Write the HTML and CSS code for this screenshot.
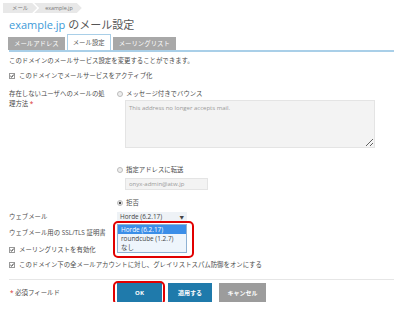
FILE: index.html
```html
<!DOCTYPE html>
<html lang="ja">

<head>
  <meta charset="UTF-8" />
  <meta name="viewport" content="width=device-width, initial-scale=1.0" />
  <title>example.jp のメール設定</title>
  <link rel="stylesheet" href="styles.css">
</head>

<body>
  <div class="page">
    <nav class="breadcrumb">
      <span class="crumb">メール</span>
      <span class="crumb last">example.jp</span>
    </nav>

    <h1 class="title"><span class="domain">example.jp</span> のメール設定</h1>

    <div class="tabs">
      <span class="tab">メールアドレス</span>
      <span class="tab active">メール設定</span>
      <span class="tab">メーリングリスト</span>
    </div>

    <p class="intro">このドメインのメールサービス設定を変更することができます。</p>

    <label class="check first">
      <svg class="box" width="6" height="6" viewBox="0 0 6 6"><rect x="0.5" y="0.5" width="5" height="5" fill="#fff" stroke="#999"/><path d="M1.4 3 L2.6 4.2 L4.7 1.6" fill="none" stroke="#333" stroke-width="1"/></svg>
      このドメインでメールサービスをアクティブ化
    </label>

    <div class="row bounce">
      <div class="label required">存在しないユーザへのメールの処理方法</div>
      <div class="field">
        <div class="radio">
          <svg width="6" height="6" viewBox="0 0 6 6"><circle cx="3" cy="3" r="2.5" fill="#eee" stroke="#bbb"/></svg>
          メッセージ付きでバウンス
        </div>
        <textarea class="message" readonly placeholder="This address no longer accepts mail."></textarea>

        <div class="radio forward">
          <svg width="6" height="6" viewBox="0 0 6 6"><circle cx="3" cy="3" r="2.5" fill="#eee" stroke="#bbb"/></svg>
          指定アドレスに転送
        </div>
        <input class="address" readonly placeholder="onyx-admin@atw.jp">

        <div class="radio reject">
          <svg width="6" height="6" viewBox="0 0 6 6"><circle cx="3" cy="3" r="2.5" fill="#eee" stroke="#bbb"/><circle cx="3" cy="3" r="1.2" fill="#444"/></svg>
          拒否
        </div>
      </div>
    </div>

    <div class="row webmail">
      <div class="label">ウェブメール</div>
      <div class="field">
        <div class="select">Horde (6.2.17)<span class="arrow">▼</span></div>
        <ul class="options">
          <li class="selected">Horde (6.2.17)</li>
          <li>roundcube (1.2.7)</li>
          <li>なし</li>
        </ul>
        <span class="mark list-mark"></span>
      </div>
    </div>

    <div class="row ssl">
      <div class="label">ウェブメール用の SSL/TLS 証明書</div>
    </div>

    <label class="check lists">
      <svg class="box" width="6" height="6" viewBox="0 0 6 6"><rect x="0.5" y="0.5" width="5" height="5" fill="#fff" stroke="#999"/><path d="M1.4 3 L2.6 4.2 L4.7 1.6" fill="none" stroke="#333" stroke-width="1"/></svg>
      メーリングリストを有効化
    </label>

    <label class="check grey">
      <svg class="box" width="6" height="6" viewBox="0 0 6 6"><rect x="0.5" y="0.5" width="5" height="5" fill="#fff" stroke="#999"/><path d="M1.4 3 L2.6 4.2 L4.7 1.6" fill="none" stroke="#333" stroke-width="1"/></svg>
      このドメイン下の全メールアカウントに対し、グレイリストスパム防御をオンにする
    </label>

    <div class="footer">
      <div class="label"><span class="req">*</span> 必須フィールド</div>
      <div class="buttons">
        <span class="ok-wrap">
          <button class="btn primary">OK</button>
          <span class="mark ok-mark"></span>
        </span>
        <button class="btn primary apply">適用する</button>
        <button class="btn cancel">キャンセル</button>
      </div>
    </div>
  </div>
</body>

</html>
```

FILE: styles.css
```css
:root {
  --text-gray: #4a4a4a;
  --link-blue: #3d9ad8;
  --tab-line: #a9cfe8;
  --button-blue: #1f7aab;
  --mark-red: #e10000;
}

body {
  margin: 0;
  font-family: 'Open Sans', 'Noto Sans CJK JP', sans-serif;
  font-size: 6.4px;
  color: var(--text-gray);
  background: #fff;
}

.page {
  padding: 3px 0 0 9px;
}

.breadcrumb {
  display: flex;
  margin-left: -6px;
  height: 10px;
}

.crumb {
  background: #e8e8e8;
  color: #777;
  font-size: 5.4px;
  line-height: 10px;
  padding: 0 9px 0 9px;
  clip-path: polygon(0 0, calc(100% - 5px) 0, 100% 50%, calc(100% - 5px) 100%, 0 100%);
}

.crumb.last {
  margin-left: -3px;
  padding-left: 11px;
  clip-path: polygon(0 0, calc(100% - 5px) 0, 100% 50%, calc(100% - 5px) 100%, 0 100%, 5px 50%);
}

.title {
  margin: 4px 0 0;
  font-size: 11px;
  line-height: 15px;
  font-weight: normal;
  color: #555;
}

.domain {
  color: var(--link-blue);
}

.tabs {
  display: flex;
  align-items: flex-end;
  gap: 2px;
  margin-top: 2px;
  border-bottom: 2px solid var(--tab-line);
}

.tab {
  height: 13px;
  line-height: 13px;
  padding: 0 6px;
  background: #a8a8a8;
  color: #fff;
}

.tab:first-child {
  margin-left: -1px;
}

.tab.active {
  height: 15px;
  line-height: 16px;
  padding: 0 5px;
  background: #fff;
  color: #555;
  border: 1px solid var(--tab-line);
  border-bottom: none;
}

.intro {
  margin: 4px 0 0;
  line-height: 10px;
}

.check {
  display: flex;
  align-items: center;
  gap: 4px;
  line-height: 10px;
}

.check.first {
  margin-top: 5px;
}

.check.lists {
  margin-top: 7px;
}

.check.grey {
  margin-top: 5px;
}

.box {
  flex: none;
}

.row {
  display: flex;
}

.label {
  width: 100px;
  margin-right: 8px;
  flex: none;
}

.label.required::after {
  content: " *";
  color: #d9302c;
}

.req {
  color: #d9302c;
}

.field {
  position: relative;
  flex: 1;
}

.bounce {
  margin-top: 8px;
  line-height: 10px;
}

.radio {
  display: flex;
  align-items: center;
  gap: 3px;
  line-height: 10px;
}

.message,
.address {
  display: block;
  box-sizing: border-box;
  margin: 1px 0 0 8px;
  padding: 3px 3px;
  background: #f3f3f3;
  border: 1px solid #e4e4e4;
  font-family: 'Open Sans', 'Noto Sans CJK JP', sans-serif;
  font-size: 6px;
  color: #555;
  outline: none;
}

.message {
  width: 250px;
  height: 48px;
  resize: both;
}

.address {
  width: 83px;
  height: 12px;
  margin-top: 3px;
}

.message::placeholder,
.address::placeholder {
  color: #9a9a9a;
}

.radio.forward {
  margin-top: 17px;
}

.radio.reject {
  margin-top: 8px;
}

.webmail {
  margin-top: 4px;
  line-height: 10px;
}

.select {
  box-sizing: border-box;
  width: 70px;
  height: 10px;
  line-height: 10px;
  padding: 0 3px;
  background: #eef2f6;
  color: #444;
  display: flex;
  justify-content: space-between;
}

.arrow {
  font-size: 4.5px;
}

.options {
  position: absolute;
  top: 12px;
  left: 0;
  width: 70px;
  box-sizing: border-box;
  margin: 0;
  padding: 0;
  list-style: none;
  background: #eef5fc;
  border: 1px solid #8fb2d4;
  z-index: 2;
}

.options li {
  height: 9px;
  line-height: 9px;
  padding: 0 3px;
  color: #444;
}

.options li.selected {
  background: #3b8ee8;
  color: #fff;
}

.mark {
  position: absolute;
  border: 2.5px solid var(--mark-red);
  border-radius: 5px;
  z-index: 3;
}

.list-mark {
  top: 9px;
  left: -4px;
  width: 77px;
  height: 33px;
}

.ssl {
  margin-top: 6px;
  line-height: 10px;
}

.footer {
  display: flex;
  margin-top: 9px;
  padding-top: 3px;
  border-top: 1px solid #e6e6e6;
}

.footer .label {
  padding: 5px 0 0 1px;
  width: 99px;
  line-height: 10px;
}

.buttons {
  display: flex;
  gap: 6px;
}

.ok-wrap {
  position: relative;
  display: flex;
}

.btn {
  height: 19px;
  border: none;
  padding: 0;
  font-family: 'Open Sans', 'Noto Sans CJK JP', sans-serif;
  font-size: 6px;
  font-weight: bold;
  color: #fff;
  background: var(--button-blue);
}

.btn.primary {
  width: 45px;
}

.btn.apply {
  width: 44px;
}

.btn.cancel {
  width: 47px;
  margin-left: 1px;
  background: #9c9c9c;
}

.ok-mark {
  top: -2px;
  left: -4px;
  right: -3px;
  bottom: -3px;
}
```
